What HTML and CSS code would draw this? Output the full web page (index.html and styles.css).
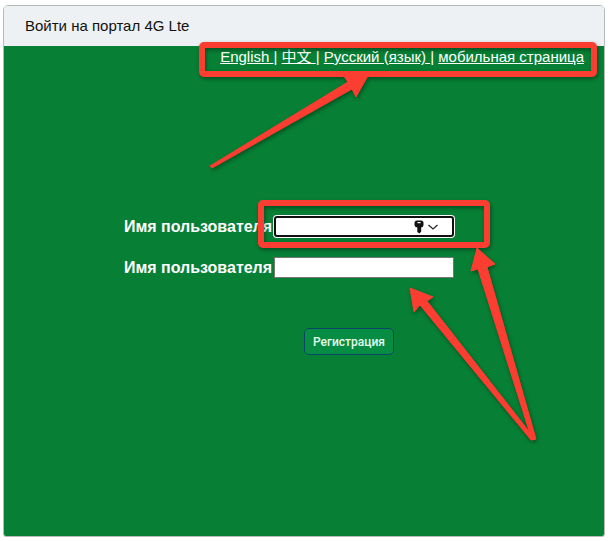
FILE: index.html
```
<!DOCTYPE html>
<html lang="ru">
  <head>
    <meta charset="utf-8" />
    <title>Войти на портал 4G Lte</title>
    <meta name="viewport" content="width=device-width, initial-scale=1" />
    <link rel="stylesheet" href="styles.css">
  </head>
  <body>
    <div class="panel">
      <h1 class="panel-title">Войти на портал 4G Lte</h1>
      <div class="panel-body">
        <nav class="languages">
          <a href="#en">English </a>|
          <a href="#zh">中文 </a>|
          <a href="#ru">Русский (язык) </a>|
          <a href="#mobile">мобильная страница</a>
        </nav>

        <form class="login" autocomplete="off">
          <div class="login-row">
            <label for="username">Имя пользователя</label>
            <div class="field">
              <input type="text" id="username" class="active" />
              <svg class="key-icon" viewBox="0 0 26 14" aria-hidden="true">
                <path fill="#111" fill-rule="evenodd" d="M3 0.500H7Q9.500 0.500 9.500 3V5Q9.500 7 7.200 7.600V11.500L5.500 13.500L3.300 12V7.600Q0.500 7 0.500 5V3Q0.500 0.500 3 0.500ZM3.500 2V3.300H6.500V2Z" />
                <path fill="none" stroke="#222" stroke-width="1.200" d="M14.500 5L19 9L23.500 5" />
              </svg>
            </div>
          </div>
          <div class="login-row">
            <label for="password">Имя пользователя</label>
            <div class="field">
              <input type="password" id="password" />
            </div>
          </div>
          <button type="submit" class="submit-button">Регистрация</button>
        </form>
      </div>
    </div>

    <!-- Hint frames and arrows over the page -->
    <svg class="hints" viewBox="0 0 610 541" aria-hidden="true">
      <g fill="none" stroke="#fb3e31" stroke-width="6">
        <rect x="202" y="45" width="392" height="29" rx="2" />
        <rect x="261" y="203" width="226" height="42" rx="2" />
      </g>
      <g fill="#fb3e31" stroke="#fb3e31" stroke-linejoin="round">
        <path d="M210 166L348 82L343 75L369 74L356 97L352 89L212 168Z" />
        <path d="M532 440L478 269L471 271L477 248L495 264L487 267L536 439Z" />
        <path d="M531 440L420 305L414 312L410 288L433 297L427 301L535 439Z" />
      </g>
    </svg>
  </body>
</html>
```
FILE: styles.css
```
* {
  box-sizing: border-box;
}
body {
  margin: 0;
  padding: 5px 5px 4px 3px;
  min-height: 100vh;
  display: flex;
  position: relative;
  background-color: #ffffff;
  font-family: "Liberation Sans", "Noto Sans CJK SC", Arial, sans-serif;
}
.panel {
  flex: 1;
  display: flex;
  flex-direction: column;
  border: 1px solid #b5bcba;
  border-radius: 5px 5px 3px 3px;
  overflow: hidden;
}
.panel-title {
  margin: 0;
  padding: 10px 21px;
  font-size: 15px;
  font-weight: 400;
  line-height: 20px;
  color: #111111;
  background-color: #edf1f4;
}
.panel-body {
  flex: 1;
  background-color: #078035;
  color: #ffffff;
}
.languages {
  padding: 0 20px;
  text-align: right;
  font-size: 15px;
  line-height: 22px;
}
.languages a {
  color: #ffffff;
}
.login {
  display: flex;
  flex-direction: column;
  align-items: center;
  gap: 20px;
  padding: 148px 30px 0 0;
}
.login-row {
  display: flex;
  align-items: center;
  gap: 2px;
}
label {
  font-size: 16px;
  font-weight: 700;
}
.field {
  position: relative;
}
input {
  display: block;
  width: 180px;
  height: 21px;
  padding: 1px 2px;
  border: 1px solid #767676;
  outline: none;
}
input.active {
  border: 2px solid #101010;
  border-radius: 3px;
  box-shadow: 0 0 0 1px #ffffff;
}
.key-icon {
  position: absolute;
  top: 4px;
  right: 14px;
  width: 26px;
  height: 14px;
}
.submit-button {
  margin: 30px 0 0 120px;
  padding: 0 8px;
  height: 27px;
  font-family: Roboto, sans-serif;
  font-size: 12px;
  font-weight: 500;
  color: #e4fbe9;
  background-color: #078c43;
  border: 1px solid #0b4668;
  border-radius: 5px;
}
.hints {
  position: absolute;
  top: 0;
  left: 0;
  width: 100%;
  pointer-events: none;
  filter: drop-shadow(1px 2px 2px rgba(0, 0, 0, 0.4));
}
```
